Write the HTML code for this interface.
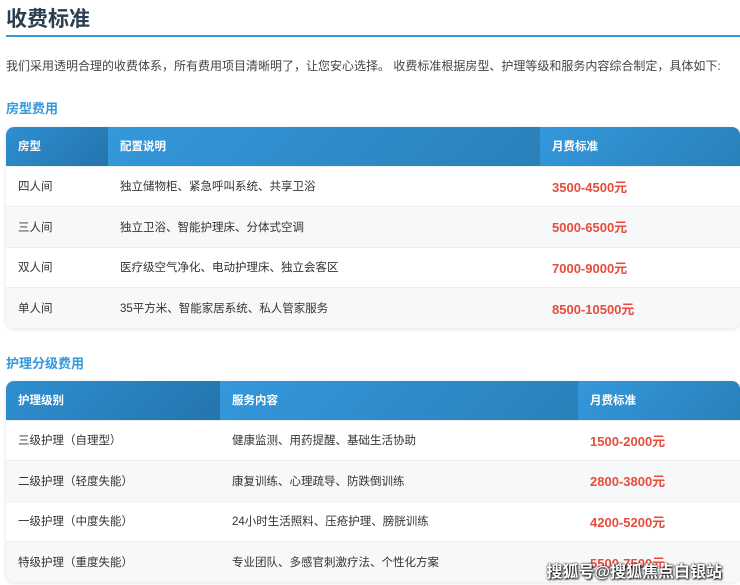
<!DOCTYPE html>
<html><head><meta charset="utf-8"><style>
*{margin:0;padding:0;box-sizing:border-box}
body{width:740px;height:585px;overflow:hidden;background:#fff;font-family:"Liberation Sans","Noto Sans CJK SC",sans-serif;color:#333;position:relative}
h1{position:absolute;left:6px;top:3px;font-size:21px;font-weight:bold;color:#2c3e50}
.line{position:absolute;left:6px;top:35px;width:734px;height:2px;background:#3498db}
p.intro{position:absolute;left:6px;top:57px;font-size:12px;color:#444;white-space:nowrap}
h3{position:absolute;left:6px;font-size:13px;font-weight:bold;color:#3498db}
table{position:absolute;left:6px;width:734px;border-collapse:collapse;font-size:11.5px;border-radius:8px;overflow:hidden;box-shadow:0 1px 4px rgba(0,0,0,.12)}
th{height:39px;text-align:left;padding-left:12px;color:#fff;font-weight:bold;background:linear-gradient(135deg,#3498db,#2a80b9)}
th.a{background:linear-gradient(135deg,#2e8fd0,#2574ad)}
td{height:40.6px;padding-left:12px;color:#333;border-top:1px solid #eceff2;background:#fff}
tr:nth-child(odd) td{background:#f7f8fa}
td.p{color:#e74c3c;font-weight:bold;font-size:13px}
.wm{position:absolute;right:18px;top:558px;font-size:16px;color:#fff;font-weight:bold;text-shadow:0 0 2px #000,1px 1px 2px #000}
</style></head><body>
<h1>收费标准</h1>
<div class="line"></div>
<p class="intro">我们采用透明合理的收费体系，所有费用项目清晰明了，让您安心选择。 收费标准根据房型、护理等级和服务内容综合制定，具体如下:</p>
<h3 style="top:98px">房型费用</h3>
<table style="top:127px">
<tr><th class="a" style="width:102px">房型</th><th style="width:432px">配置说明</th><th>月费标准</th></tr>
<tr><td>四人间</td><td>独立储物柜、紧急呼叫系统、共享卫浴</td><td class="p">3500-4500元</td></tr>
<tr><td>三人间</td><td>独立卫浴、智能护理床、分体式空调</td><td class="p">5000-6500元</td></tr>
<tr><td>双人间</td><td>医疗级空气净化、电动护理床、独立会客区</td><td class="p">7000-9000元</td></tr>
<tr><td>单人间</td><td>35平方米、智能家居系统、私人管家服务</td><td class="p">8500-10500元</td></tr>
</table>
<h3 style="top:353px">护理分级费用</h3>
<table style="top:381px">
<tr><th class="a" style="width:214px">护理级别</th><th style="width:358px">服务内容</th><th>月费标准</th></tr>
<tr><td>三级护理（自理型）</td><td>健康监测、用药提醒、基础生活协助</td><td class="p">1500-2000元</td></tr>
<tr><td>二级护理（轻度失能）</td><td>康复训练、心理疏导、防跌倒训练</td><td class="p">2800-3800元</td></tr>
<tr><td>一级护理（中度失能）</td><td>24小时生活照料、压疮护理、膀胱训练</td><td class="p">4200-5200元</td></tr>
<tr><td>特级护理（重度失能）</td><td>专业团队、多感官刺激疗法、个性化方案</td><td class="p">5500-7500元</td></tr>
</table>
<div class="wm">搜狐号@搜狐焦点白银站</div>
</body></html>
